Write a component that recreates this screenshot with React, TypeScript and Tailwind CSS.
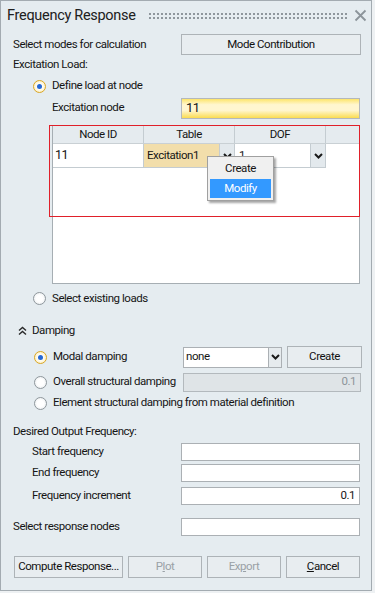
import React from 'react';

const font = "font-['Roboto',Arial,sans-serif]";

// small bold chevron used by the combo boxes
const Chevron = () => (
  <svg width="9" height="6" viewBox="0 0 9 6">
    <path d="M1 1 L4.5 4.5 L8 1" fill="none" stroke="#1a1a1a" strokeWidth="2" />
  </svg>
);

const Radio = ({ checked }: { checked?: boolean }) => (
  <span
    className={
      checked
        ? 'flex h-[13px] w-[13px] shrink-0 items-center justify-center rounded-full border border-[#d9a625] bg-[radial-gradient(circle,#ffffff_30%,#fbe8a6_100%)]'
        : 'flex h-[13px] w-[13px] shrink-0 items-center justify-center rounded-full border border-[#8f979c] bg-[radial-gradient(circle,#ffffff_40%,#e3e8eb_100%)]'
    }
  >
    {checked && <span className="h-[5px] w-[5px] rounded-full bg-[#2468d6]" />}
  </span>
);

const Button = ({ children, disabled, className = '' }: { children: React.ReactNode; disabled?: boolean; className?: string }) => (
  <div
    className={`flex items-center justify-center whitespace-nowrap border border-[#adb3b7] bg-[#e8edf0] ${disabled ? 'text-[#9aa1a6]' : 'text-[#111]'} ${className}`}
  >
    {children}
  </div>
);

const Field = ({ value = '', right }: { value?: string; right?: boolean }) => (
  <div
    className={`flex h-[18px] w-[179px] items-center border border-[#abb0b4] bg-white px-[4px] ${right ? 'justify-end' : ''}`}
  >
    {value}
  </div>
);

export default function App() {
  return (
    <div className={`h-[593px] w-[375px] whitespace-nowrap bg-[#eef1f3] text-[11.5px] tracking-[-0.45px] text-[#151515] ${font}`}>
      <div className="relative h-[591px] w-[372px] border border-[#a3abb1] bg-[#e5ecf0]">
        {/* title bar */}
        <div className="flex h-[29px] items-center pl-[6px] pr-[4px]">
          <span className="text-[14.5px] tracking-[-0.3px] text-[#202020]">Frequency Response</span>
          <div className="ml-[12px] mt-[1px] h-[8px] flex-1 bg-[radial-gradient(circle,#8e969c_0.9px,transparent_1.2px)] bg-[length:4px_4px]" />
          <svg className="ml-[5px]" width="13" height="13" viewBox="0 0 13 13">
            <path d="M1.5 1.5 L11.5 11.5 M11.5 1.5 L1.5 11.5" stroke="#8c949a" strokeWidth="1.8" />
          </svg>
        </div>

        <div className="pl-[12px]">
          {/* modes */}
          <div className="mt-[4px] flex h-[21px] items-center">
            <span className="w-[168px]">Select modes for calculation</span>
            <Button className="h-[21px] w-[180px]">Mode Contribution</Button>
          </div>

          <div className="flex h-[20px] items-center">Excitation Load:</div>

          <div className="mt-[1px] flex h-[20px] items-center gap-[6px] pl-[20px]">
            <Radio checked />
            <span>Define load at node</span>
          </div>

          <div className="mt-[1px] flex h-[22px] items-center pl-[39px]">
            <span className="w-[129px]">Excitation node</span>
            <div className="flex h-[21px] w-[179px] items-center border border-[#b4b8bb] bg-[linear-gradient(#fde56a,#fff6cf_30%,#fff6cf_60%,#fbdc50)] px-[4px] text-[13px]">
              11
            </div>
          </div>

          {/* table */}
          <div className="relative mt-[6px] ml-[39px] h-[159px] w-[308px] border border-[#a6aeb3] bg-white">
            <div className="flex h-[18px] border-b border-[#c9d0d4] bg-[#e5ebef]">
              <div className="flex w-[91px] items-center justify-center border-r border-[#c4ccd1]">Node ID</div>
              <div className="flex w-[91px] items-center justify-center border-r border-[#c4ccd1]">Table</div>
              <div className="flex w-[91px] items-center justify-center border-r border-[#c4ccd1]">DOF</div>
            </div>
            <div className="flex h-[24px]">
              <div className="flex w-[91px] items-center border-r border-b border-[#c4ccd1] px-[2px] text-[12.5px]">11</div>
              <div className="flex w-[91px] border-r border-b border-[#c4ccd1]">
                <div className="flex flex-1 items-center bg-[#f2deab] px-[3px]">Excitation1</div>
                <div className="flex w-[15px] items-center justify-center border-l border-[#c4ccd1] bg-[#e3e9ed]">
                  <Chevron />
                </div>
              </div>
              <div className="flex w-[91px] border-r border-b border-[#c4ccd1]">
                <div className="flex flex-1 items-center px-[4px]">1</div>
                <div className="flex w-[15px] items-center justify-center border-l border-[#c4ccd1] bg-[#e3e9ed]">
                  <Chevron />
                </div>
              </div>
            </div>

            {/* context menu */}
            <div className="absolute left-[154px] top-[30px] w-[67px] border border-[#a0a0a0] bg-[#f0f0f0] p-[2px] shadow-[2px_2px_2px_rgba(0,0,0,0.35)]">
              <div className="flex h-[20px] items-center justify-center">Create</div>
              <div className="flex h-[19px] items-center justify-center bg-[#3399ff] text-white">Modify</div>
            </div>
          </div>

          {/* annotation highlight */}
          <div className="pointer-events-none absolute left-[48px] top-[124px] h-[92px] w-[311px] border border-[#e0202a]" />

          <div className="mt-[5px] flex h-[19px] items-center gap-[6px] pl-[20px]">
            <Radio />
            <span>Select existing loads</span>
          </div>

          {/* damping */}
          <div className="mt-[13px] flex h-[20px] items-center gap-[5px] pl-[5px]">
            <svg width="9" height="10" viewBox="0 0 9 10">
              <path d="M1 4.5 L4.5 1.5 L8 4.5 M1 8.5 L4.5 5.5 L8 8.5" fill="none" stroke="#2a2a2a" strokeWidth="1.4" />
            </svg>
            <span>Damping</span>
          </div>

          <div className="mt-[5px] flex h-[22px] items-center pl-[21px]">
            <Radio checked />
            <span className="ml-[6px] w-[130px]">Modal damping</span>
            <div className="flex h-[21px] w-[99px] border border-[#abb0b4] bg-white">
              <div className="flex flex-1 items-center px-[2px]">none</div>
              <div className="flex w-[13px] items-center justify-center border-l border-[#abb0b4] bg-[#e6ebee]">
                <Chevron />
              </div>
            </div>
            <Button className="ml-[5px] h-[22px] w-[75px]">Create</Button>
          </div>

          <div className="mt-[4px] flex h-[20px] items-center pl-[21px]">
            <Radio />
            <span className="ml-[6px] w-[130px]">Overall structural damping</span>
            <div className="flex h-[19px] w-[178px] items-center justify-end border border-[#b3b9bd] bg-[#dfe4e7] px-[4px] text-[#8d949a]">
              0.1
            </div>
          </div>

          <div className="mt-[1px] flex h-[20px] items-center pl-[21px]">
            <Radio />
            <span className="ml-[6px]">Element structural damping from material definition</span>
          </div>

          {/* output frequency */}
          <div className="mt-[9px] flex h-[20px] items-center">Desired Output Frequency:</div>
          <div className="flex h-[20px] items-center pl-[19px]">
            <span className="w-[149px]">Start frequency</span>
            <Field />
          </div>
          <div className="mt-[1px] flex h-[20px] items-center pl-[19px]">
            <span className="w-[149px]">End frequency</span>
            <Field />
          </div>
          <div className="mt-[3px] flex h-[20px] items-center pl-[19px]">
            <span className="w-[149px]">Frequency increment</span>
            <Field value="0.1" right />
          </div>

          <div className="mt-[11px] flex h-[20px] items-center">
            <span className="w-[168px]">Select response nodes</span>
            <Field />
          </div>

          {/* footer buttons */}
          <div className="mt-[19px] flex h-[22px] gap-[5px] pl-[1px]">
            <Button className="w-[109px]">Compute Response...</Button>
            <Button disabled className="w-[74px]">
              P<span className="underline">l</span>ot
            </Button>
            <Button disabled className="w-[74px]">
              Ex<span className="underline">p</span>ort
            </Button>
            <Button className="w-[74px]">
              <span className="underline">C</span>ancel
            </Button>
          </div>
        </div>
      </div>
    </div>
  );
}
